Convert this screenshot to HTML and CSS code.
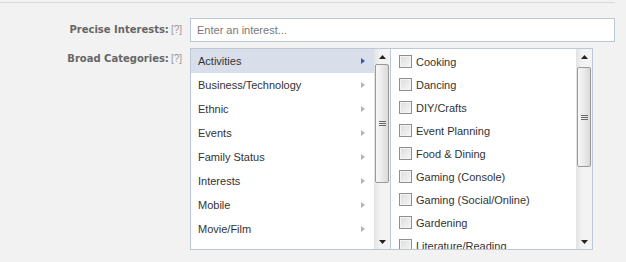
FILE: index.html
```html
<!DOCTYPE html>
<html>
<head>
<meta charset="utf-8">
<link rel="stylesheet" href="styles.css">
</head>
<body>
<div class="rule"></div>
<div class="form">
  <div class="label label-input">Precise Interests:<span class="help">[?]</span></div>
  <div class="field"><div class="input">Enter an interest...</div></div>

  <div class="label label-cat">Broad Categories:<span class="help">[?]</span></div>
  <div class="field cats">
    <div class="box box-left">
      <ul class="list cat-list">
        <li class="cat selected">Activities<span class="arr"></span></li>
        <li class="cat">Business/Technology<span class="arr"></span></li>
        <li class="cat">Ethnic<span class="arr"></span></li>
        <li class="cat">Events<span class="arr"></span></li>
        <li class="cat">Family Status<span class="arr"></span></li>
        <li class="cat">Interests<span class="arr"></span></li>
        <li class="cat">Mobile<span class="arr"></span></li>
        <li class="cat">Movie/Film<span class="arr"></span></li>
      </ul>
      <div class="sb">
        <div class="sb-btn"><svg width="7" height="4" viewBox="0 0 7 4"><path d="M0 4L3.5 0L7 4Z" fill="#222"/></svg></div>
        <div class="sb-track">
          <div class="thumb thumb-left"><svg width="7" height="5" viewBox="0 0 7 5"><path d="M0 0.5H7M0 2.5H7M0 4.5H7" stroke="#6a6a6a" stroke-width="1"/></svg></div>
        </div>
        <div class="sb-btn"><svg width="7" height="4" viewBox="0 0 7 4"><path d="M0 0L3.5 4L7 0Z" fill="#222"/></svg></div>
      </div>
    </div>
    <div class="box box-right">
      <ul class="list chk-list">
        <li class="chk"><span class="cb"></span>Cooking</li>
        <li class="chk"><span class="cb"></span>Dancing</li>
        <li class="chk"><span class="cb"></span>DIY/Crafts</li>
        <li class="chk"><span class="cb"></span>Event Planning</li>
        <li class="chk"><span class="cb"></span>Food &amp; Dining</li>
        <li class="chk"><span class="cb"></span>Gaming (Console)</li>
        <li class="chk"><span class="cb"></span>Gaming (Social/Online)</li>
        <li class="chk"><span class="cb"></span>Gardening</li>
        <li class="chk"><span class="cb"></span>Literature/Reading</li>
      </ul>
      <div class="sb">
        <div class="sb-btn"><svg width="7" height="4" viewBox="0 0 7 4"><path d="M0 4L3.5 0L7 4Z" fill="#222"/></svg></div>
        <div class="sb-track">
          <div class="thumb thumb-right"><svg width="7" height="5" viewBox="0 0 7 5"><path d="M0 0.5H7M0 2.5H7M0 4.5H7" stroke="#6a6a6a" stroke-width="1"/></svg></div>
        </div>
        <div class="sb-btn"><svg width="7" height="4" viewBox="0 0 7 4"><path d="M0 0L3.5 4L7 0Z" fill="#222"/></svg></div>
      </div>
    </div>
  </div>
</div>
</body>
</html>
```

FILE: styles.css
```css
* { box-sizing: border-box; }
html, body { margin: 0; padding: 0; }
body {
  background: #f2f2f2;
  font-family: "Liberation Sans", Arial, sans-serif;
  font-size: 11px;
  color: #333;
  width: 626px;
  height: 262px;
  overflow: hidden;
}
.rule {
  width: 615px;
  height: 1px;
  margin-top: 2px;
  background: #d9d9d9;
}
.form {
  display: grid;
  grid-template-columns: 182px 425px;
  column-gap: 8px;
  row-gap: 6px;
  padding-top: 15px;
}
.label {
  text-align: right;
  font-family: "DejaVu Sans", Verdana, sans-serif;
  font-size: 10px;
  font-weight: bold;
  color: #666;
  white-space: nowrap;
}
.label-input { padding-top: 6px; }
.label-cat { padding-top: 5px; }
.help {
  font-family: "Liberation Sans", Arial, sans-serif;
  font-weight: normal;
  color: #999;
  font-size: 10px;
  margin-left: 2px;
}
.input {
  height: 24px;
  border: 1px solid #bdc7d8;
  background: #fff;
  color: #777;
  padding: 5px 0 0 6px;
  line-height: 13px;
}
.cats {
  display: flex;
}
.box {
  display: flex;
  height: 202px;
  background: #fff;
  border: 1px solid #bdc7d8;
  overflow: hidden;
}
.box-left { width: 201px; }
.box-right { width: 202px; border-left: 0; }
.list {
  list-style: none;
  margin: 0;
  padding: 0;
  flex: 1;
  overflow: hidden;
}
.cat {
  height: 24px;
  display: flex;
  align-items: center;
  justify-content: space-between;
  padding: 0 9px 0 7px;
}
.cat.selected { background: #d8dfea; }
.arr {
  width: 0;
  height: 0;
  border-top: 3.5px solid transparent;
  border-bottom: 3.5px solid transparent;
  border-left: 4px solid #b4b4b4;
}
.cat.selected .arr { border-left-color: #3b5998; }
.chk-list { padding-top: 1px; }
.chk {
  height: 23px;
  display: flex;
  align-items: center;
  padding-left: 8px;
}
.cb {
  width: 13px;
  height: 13px;
  border: 1px solid #8f8f8f;
  background: linear-gradient(135deg, #dcdcdc, #f6f6f6);
  box-shadow: inset 0 0 0 1px #f4f4f4;
  margin-right: 4px;
  flex: none;
}
.sb {
  width: 16px;
  display: flex;
  flex-direction: column;
  background: linear-gradient(to right, #e3e3e3, #f3f3f3 40%, #f3f3f3);
}
.sb-btn {
  height: 15px;
  display: flex;
  align-items: center;
  justify-content: center;
  flex: none;
}
.sb-track {
  flex: 1;
  padding: 0 1px;
}
.thumb {
  border: 1px solid #9a9a9a;
  border-radius: 2px;
  background: linear-gradient(to right, #f7f7f7, #ececec 45%, #d9d9d9);
  display: flex;
  align-items: center;
  justify-content: center;
}
.thumb-left { height: 119px; }
.thumb-right { margin-top: 3px; height: 100px; }
```
